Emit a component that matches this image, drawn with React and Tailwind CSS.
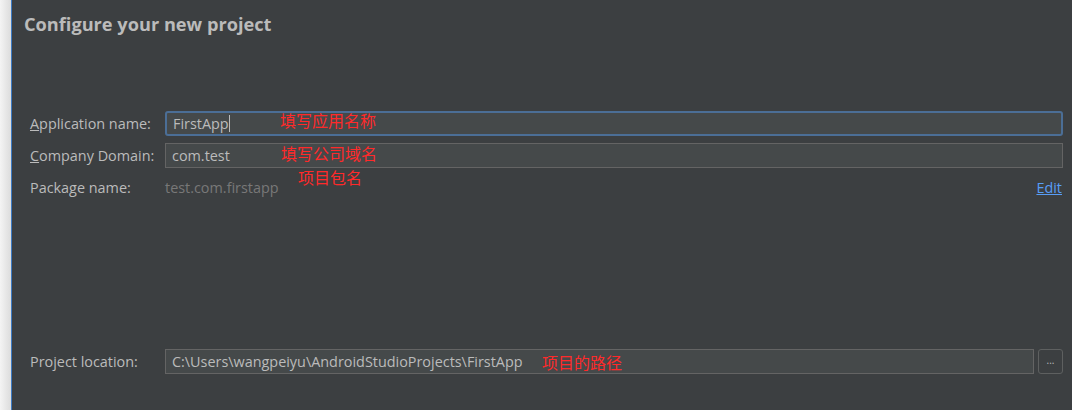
const FONT = { fontFamily: '"Open Sans", "Liberation Sans", "Noto Sans CJK SC", sans-serif' }

function Note({ children, className }) {
  return (
    <span
      className={`absolute text-[16px] leading-none text-[#ff2a2a] whitespace-nowrap ${className}`}
      style={{ fontFamily: '"Noto Sans CJK SC", sans-serif' }}
    >
      {children}
    </span>
  )
}

function Field({ children, focused }) {
  return (
    <div
      className={`flex-1 h-[25px] flex items-center px-[6px] bg-[#45494a] text-[14.4px] text-[#bbbbbb] ${
        focused ? 'border-2 border-[#4b6e96] rounded-[3px] px-[5px]' : 'border border-[#646464]'
      }`}
    >
      {children}
    </div>
  )
}

export default function App() {
  return (
    <div className="w-full h-[410px] flex overflow-hidden" style={FONT}>
      {/* window edge */}
      <div className="w-[11px] h-full bg-gradient-to-r from-[#f4f4f4] to-[#dcdcdc]" />
      <div className="w-px h-full bg-[#3d7bc4]" />

      <div className="flex-1 h-full bg-[#3c3f41] flex flex-col">
        <h1 className="pl-[12px] pt-[11px] text-[18.2px] font-bold text-[#bbbbbb] leading-[26px]">
          Configure your new project
        </h1>

        <div className="relative mt-[74px] pl-[18px] pr-[9px] flex flex-col text-[14.4px] text-[#bbbbbb]">
          <div className="flex items-center h-[25px]">
            <span className="w-[135px]"><u>A</u>pplication name:</span>
            <Field focused>
              FirstApp<span className="w-px h-[17px] bg-[#bbbbbb]" />
            </Field>
          </div>
          <div className="flex items-center h-[25px] mt-[7px]">
            <span className="w-[135px]"><u>C</u>ompany Domain:</span>
            <Field>com.test</Field>
          </div>
          <div className="flex items-center h-[25px] mt-[7px]">
            <span className="w-[135px]">Package name:</span>
            <span className="flex-1 text-[#787878]">test.com.firstapp</span>
            <span className="text-[#589df6] underline mr-px">Edit</span>
          </div>

          <Note className="left-[268px] top-[1px]">填写应用名称</Note>
          <Note className="left-[269px] top-[34px]">填写公司域名</Note>
          <Note className="left-[286px] top-[58px]">项目包名</Note>
        </div>

        <div className="relative mt-[149px] pl-[18px] pr-[9px] flex items-center h-[25px] text-[14.4px] text-[#bbbbbb]">
          <span className="w-[135px]">Project location:</span>
          <Field>C:\Users\wangpeiyu\AndroidStudioProjects\FirstApp</Field>
          <div className="ml-[4px] w-[25px] h-[25px] border border-[#5e6060] rounded-[3px] flex items-center justify-center text-[#bbbbbb] text-[10px] leading-none pb-[4px]">
            ...
          </div>
          <Note className="left-[530px] top-[5px]">项目的路径</Note>
        </div>
      </div>
    </div>
  )
}
